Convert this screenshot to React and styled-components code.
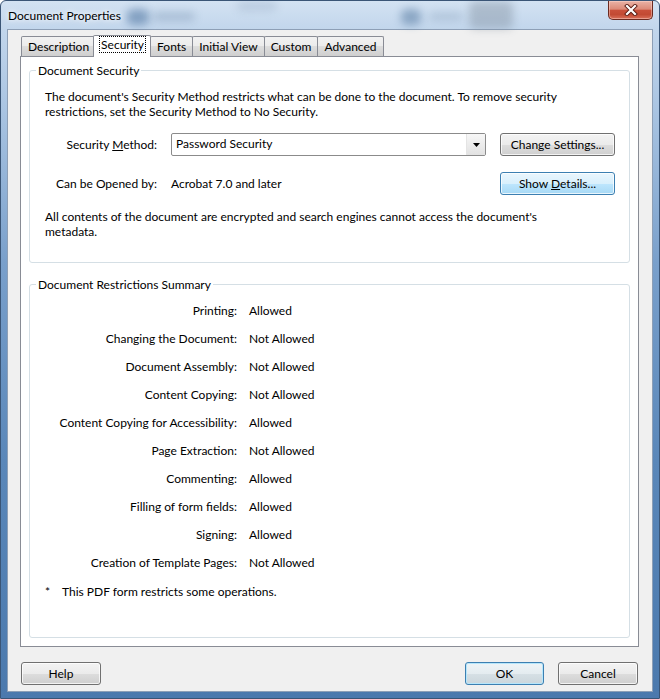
import React from 'react';
import styled, { createGlobalStyle, css } from 'styled-components';

const GlobalStyle = createGlobalStyle`
  html, body { margin: 0; padding: 0; background: #fff; }
  body {
    font-family: Lato, "Noto Sans", "Liberation Sans", sans-serif;
    font-size: 12px;
    color: #000;
  }
  #root { width: 660px; height: 699px; }
`;

const Window = styled.div`
  position: relative;
  width: 660px;
  height: 699px;
  box-sizing: border-box;
  display: flex;
  flex-direction: column;
  border: 1px solid #3a5576;
  border-radius: 6px 6px 0 0;
  overflow: hidden;
  background: linear-gradient(180deg, #d3e2f2 0px, #c2d6ec 28px, #a9c4e2 110px, #7aa0cb 260px, #5a87b9 460px, #4b79ad 699px);
`;

const TitleBar = styled.div`
  position: relative;
  height: 28px;
  flex: none;
  display: flex;
  align-items: flex-start;
  justify-content: space-between;
  padding: 0 6px 0 7px;
`;

const Blob = styled.div`
  position: absolute;
  border-radius: 6px;
  filter: blur(4px);
  opacity: ${p => p.$o || 0.5};
  background: ${p => p.$c};
  left: ${p => p.$x}px;
  top: ${p => p.$y}px;
  width: ${p => p.$w}px;
  height: ${p => p.$h}px;
`;

const Title = styled.div`
  position: relative;
  line-height: 29px;
  font-size: 12px;
  color: #000;
  text-shadow: 0 0 8px rgba(255,255,255,0.95), 0 0 4px rgba(255,255,255,0.9);
`;

const CloseButton = styled.div`
  position: relative;
  width: 45px;
  height: 19px;
  box-sizing: border-box;
  border: 1px solid #6b2a20;
  border-top: none;
  border-radius: 0 0 5px 5px;
  background: linear-gradient(180deg, #eab3a6 0%, #dc8a78 45%, #c9503a 52%, #c24a33 75%, #d9705a 100%);
  box-shadow: inset 0 0 0 1px rgba(255,220,210,0.45);
  display: flex;
  align-items: center;
  justify-content: center;
`;

const Client = styled.div`
  flex: 1;
  margin: 0 6px 6px 6px;
  border: 1px solid #8d9fb6;
  background: #f0f0f0;
  display: flex;
  flex-direction: column;
  min-height: 0;
`;

const TabStrip = styled.div`
  display: flex;
  align-items: flex-end;
  padding: 4px 0 0 13px;
  height: 22px;
  position: relative;
  z-index: 1;
`;

const Tab = styled.div`
  box-sizing: border-box;
  height: 20px;
  padding: 0 6px;
  margin-right: -1px;
  border: 1px solid #898c95;
  border-bottom: none;
  border-radius: 2px 2px 0 0;
  background: linear-gradient(180deg, #f2f2f2 0%, #ebebeb 50%, #dddddd 50%, #cfcfcf 100%);
  line-height: 19px;
  white-space: nowrap;
  ${p => p.$active && css`
    height: 22px;
    margin: 0 -1px -1px -2px;
    padding: 0 5px 0 6px;
    background: #fff;
    line-height: 18px;
    position: relative;
    z-index: 2;
  `}
`;

const Focus = styled.span`
  outline: 1px dotted #000;
  outline-offset: 0px;
  padding: 0 1px;
`;

const Panel = styled.div`
  flex: 1;
  margin: 0 13px 0 12px;
  border: 1px solid #898c95;
  background: #fff;
  display: flex;
  flex-direction: column;
  padding: 6px 8px 8px 8px;
  min-height: 0;
`;

const Group = styled.fieldset`
  margin: 0;
  padding: 0;
  border: 1px solid #d5dfe5;
  border-radius: 3px;
  min-width: 0;
  ${p => p.$grow && css`flex: 1;`}
  ${p => p.$gap && css`margin-top: ${p.$gap}px;`}
`;

const Legend = styled.legend`
  margin-left: 6px;
  padding: 0 2px;
  line-height: 15px;
  color: #000;
`;

const GroupBody = styled.div`
  padding: ${p => p.$pad};
`;

const Para = styled.p`
  margin: 0;
  line-height: 15px;
  width: 528px;
`;

const MethodGrid = styled.div`
  display: grid;
  grid-template-columns: 112px 315px 115px;
  grid-auto-rows: 23px;
  column-gap: 14px;
  row-gap: 16px;
  align-items: center;
  margin: 14px 0 14px 0;
`;

const FieldLabel = styled.div`
  text-align: right;
  white-space: nowrap;
`;

const Combo = styled.div`
  height: 23px;
  box-sizing: border-box;
  border: 1px solid #8b8b8b;
  border-radius: 2px;
  background: #fff;
  display: flex;
  align-items: stretch;
`;

const ComboText = styled.div`
  flex: 1;
  padding-left: 4px;
  line-height: 20px;
`;

const ComboArrow = styled.div`
  width: 18px;
  border-left: 1px solid #e4e4e4;
  background: linear-gradient(180deg, #f7f7f7 0%, #ececec 50%, #e2e2e2 100%);
  display: flex;
  align-items: center;
  justify-content: center;
`;

const Button = styled.div`
  box-sizing: border-box;
  height: 23px;
  width: ${p => p.$w}px;
  border: 1px solid #707070;
  border-radius: 3px;
  background: linear-gradient(180deg, #f3f3f3 0%, #ebebeb 50%, #dddddd 51%, #cfcfcf 100%);
  box-shadow: inset 0 0 0 1px rgba(255,255,255,0.75);
  display: flex;
  align-items: center;
  justify-content: center;
  line-height: 20px;
  white-space: nowrap;
  ${p => p.$hover && css`
    border-color: #3c7fb1;
    background: linear-gradient(180deg, #eaf6fd 0%, #d9f0fc 50%, #bee6fd 51%, #a7d9f5 100%);
  `}
  ${p => p.$default && css`
    border-color: #3c7fb1;
    box-shadow: inset 0 0 0 1px #b6e6fb;
    background: linear-gradient(180deg, #eef4f7 0%, #e4ecf0 50%, #d6e0e5 51%, #cbd6dc 100%);
  `}
`;

const RestrictGrid = styled.div`
  display: grid;
  grid-template-columns: 192px auto;
  grid-auto-rows: 28px;
  column-gap: 12px;
  align-items: center;
`;

const Value = styled.div`
  white-space: nowrap;
`;

const Footnote = styled.div`
  display: flex;
  margin-top: 8px;
  line-height: 15px;
`;

const Star = styled.span`
  width: 17px;
`;

const Footer = styled.div`
  flex: none;
  display: flex;
  align-items: center;
  padding: 15px 14px 6px 13px;
`;

const Spacer = styled.div`
  flex: 1;
`;

const ButtonGap = styled.div`
  width: 14px;
`;

const restrictions = [
  ['Printing:', 'Allowed'],
  ['Changing the Document:', 'Not Allowed'],
  ['Document Assembly:', 'Not Allowed'],
  ['Content Copying:', 'Not Allowed'],
  ['Content Copying for Accessibility:', 'Allowed'],
  ['Page Extraction:', 'Not Allowed'],
  ['Commenting:', 'Allowed'],
  ['Filling of form fields:', 'Allowed'],
  ['Signing:', 'Allowed'],
  ['Creation of Template Pages:', 'Not Allowed'],
];

const tabs = ['Description', 'Security', 'Fonts', 'Initial View', 'Custom', 'Advanced'];

export default function App() {
  return (
    <>
      <GlobalStyle />
      <Window>
        <TitleBar>
          <Blob $x={126} $y={8} $w={22} $h={16} $c="#2e5a8c" $o={0.45} />
          <Blob $x={152} $y={11} $w={42} $h={9} $c="#6d88a8" $o={0.35} />
          <Blob $x={400} $y={8} $w={20} $h={16} $c="#3f6791" $o={0.45} />
          <Blob $x={428} $y={11} $w={34} $h={9} $c="#7d95b0" $o={0.3} />
          <Blob $x={468} $y={0} $w={44} $h={28} $c="#6f7d8c" $o={0.35} />
          <Blob $x={236} $y={0} $w={40} $h={10} $c="#8aa0b9" $o={0.3} />
          <Title>Document Properties</Title>
          <CloseButton>
            <svg width="14" height="12" viewBox="0 0 14 12">
              <path d="M3 2 L11 10 M11 2 L3 10" stroke="#5a1b12" strokeWidth="4" strokeLinecap="square" fill="none" />
              <path d="M3 2 L11 10 M11 2 L3 10" stroke="#fff" strokeWidth="2.2" strokeLinecap="square" fill="none" />
            </svg>
          </CloseButton>
        </TitleBar>
        <Client>
          <TabStrip>
            {tabs.map(t => (
              <Tab key={t} $active={t === 'Security'}>
                {t === 'Security' ? <Focus>{t}</Focus> : t}
              </Tab>
            ))}
          </TabStrip>
          <Panel>
            <Group>
              <Legend>Document Security</Legend>
              <GroupBody $pad="11px 15px 23px 15px">
                <Para>
                  The document's Security Method restricts what can be done to the document. To remove security restrictions, set the Security Method to No Security.
                </Para>
                <MethodGrid>
                  <FieldLabel>Security <u>M</u>ethod:</FieldLabel>
                  <Combo>
                    <ComboText>Password Security</ComboText>
                    <ComboArrow>
                      <svg width="7" height="4" viewBox="0 0 7 4"><path d="M0 0 H7 L3.5 4 Z" fill="#000" /></svg>
                    </ComboArrow>
                  </Combo>
                  <Button $w={115}><span>Change Settings...</span></Button>
                  <FieldLabel>Can be Opened by:</FieldLabel>
                  <Value>Acrobat 7.0 and later</Value>
                  <Button $w={115} $hover><span>Show <u>D</u>etails...</span></Button>
                </MethodGrid>
                <Para>
                  All contents of the document are encrypted and search engines cannot access the document's metadata.
                </Para>
              </GroupBody>
            </Group>
            <Group $grow $gap={14}>
              <Legend>Document Restrictions Summary</Legend>
              <GroupBody $pad="4px 15px 0 15px">
                <RestrictGrid>
                  {restrictions.map(([k, v]) => (
                    <React.Fragment key={k}>
                      <FieldLabel>{k}</FieldLabel>
                      <Value>{v}</Value>
                    </React.Fragment>
                  ))}
                </RestrictGrid>
                <Footnote>
                  <Star>*</Star>
                  <span>This PDF form restricts some operations.</span>
                </Footnote>
              </GroupBody>
            </Group>
          </Panel>
          <Footer>
            <Button $w={80}><span>Help</span></Button>
            <Spacer />
            <Button $w={79} $default><span>OK</span></Button>
            <ButtonGap />
            <Button $w={80}><span>Cancel</span></Button>
          </Footer>
        </Client>
      </Window>
    </>
  );
}
